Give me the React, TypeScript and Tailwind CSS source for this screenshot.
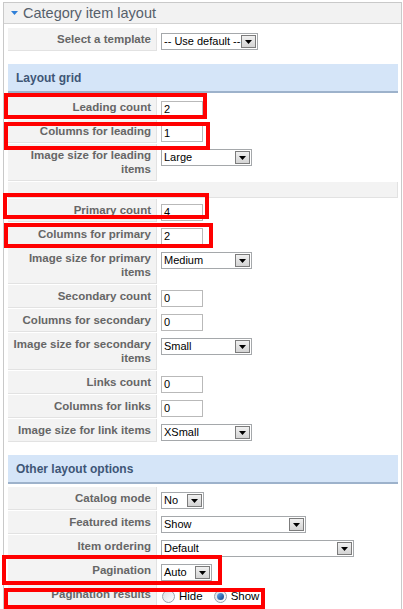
import React from "react";

type Field =
  | { kind: "input"; label: string; value: string }
  | { kind: "select"; label: string; value: string; width: number }
  | { kind: "radio"; label: string }
  | { kind: "sep" };

const gridFields: Field[] = [
  { kind: "input", label: "Leading count", value: "2" },
  { kind: "input", label: "Columns for leading", value: "1" },
  { kind: "select", label: "Image size for leading items", value: "Large", width: 91 },
  { kind: "sep" },
  { kind: "input", label: "Primary count", value: "4" },
  { kind: "input", label: "Columns for primary", value: "2" },
  { kind: "select", label: "Image size for primary items", value: "Medium", width: 91 },
  { kind: "input", label: "Secondary count", value: "0" },
  { kind: "input", label: "Columns for secondary", value: "0" },
  { kind: "select", label: "Image size for secondary items", value: "Small", width: 91 },
  { kind: "input", label: "Links count", value: "0" },
  { kind: "input", label: "Columns for links", value: "0" },
  { kind: "select", label: "Image size for link items", value: "XSmall", width: 91 },
];

const otherFields: Field[] = [
  { kind: "select", label: "Catalog mode", value: "No", width: 43 },
  { kind: "select", label: "Featured items", value: "Show", width: 145 },
  { kind: "select", label: "Item ordering", value: "Default", width: 193 },
  { kind: "select", label: "Pagination", value: "Auto", width: 51 },
  { kind: "radio", label: "Pagination results" },
];

function Select({ value, width }: { value: string; width: number }) {
  return (
    <div
      className="flex h-[17px] items-center border border-[#a5a8ab] bg-white"
      style={{ width }}
    >
      <span className="flex-1 overflow-hidden whitespace-nowrap pl-[2px] text-[11px] leading-[15px] text-black">
        {value}
      </span>
      <span className="mr-[1px] flex h-[13px] w-[15px] shrink-0 items-center justify-center border border-[#7c7c7c] bg-gradient-to-b from-[#f0f0f0] to-[#d4d4d4]">
        <svg width="7" height="4" viewBox="0 0 7 4">
          <path d="M0 0h7L3.5 4z" fill="#000" />
        </svg>
      </span>
    </div>
  );
}

function TextBox({ value }: { value: string }) {
  return (
    <div className="flex h-[17px] w-[42px] items-center border border-[#b9b9b9] bg-white pl-[2px] text-[11px] leading-[15px] text-black">
      {value}
    </div>
  );
}

function Radio({ checked }: { checked?: boolean }) {
  return (
    <span className="flex h-[13px] w-[13px] items-center justify-center rounded-full border border-[#9aa3ad] bg-gradient-to-br from-[#d9dee4] to-white">
      {checked && (
        <span className="h-[7px] w-[7px] rounded-full bg-gradient-to-br from-[#6cb0ee] to-[#0d3f86]" />
      )}
    </span>
  );
}

function Row({ field }: { field: Field }) {
  if (field.kind === "sep") {
    return <div className="h-[16px] border-r border-b border-[#e2e2e2] bg-[#f3f3f3]" />;
  }
  return (
    <div className="flex">
      <div className="w-[149px] border-r border-b border-[#e2e2e2] bg-[#f3f3f3] py-[4px] pr-[5px] pl-[3px] text-right text-[11.5px] leading-[14px] font-bold text-[#666]">
        {field.label}
      </div>
      <div className="pt-[5px] pl-[4px]">
        {field.kind === "input" && <TextBox value={field.value} />}
        {field.kind === "select" && <Select value={field.value} width={field.width} />}
        {field.kind === "radio" && (
          <div className="flex h-[17px] items-center text-[11.5px] text-black">
            <span className="ml-[1px]">
              <Radio />
            </span>
            <span className="ml-[4px]">Hide</span>
            <span className="ml-[11px]">
              <Radio checked />
            </span>
            <span className="ml-[4px]">Show</span>
          </div>
        )}
      </div>
    </div>
  );
}

function SectionHeader({ title }: { title: string }) {
  return (
    <div className="flex h-[29px] items-center border-b-2 border-[#9db2cb] bg-[#d5e5f8] pl-[8px] text-[12px] font-bold text-[#3e5676]">
      {title}
    </div>
  );
}

export default function App() {
  const marks = [
    "left-[4px] top-[93px] w-[203px] h-[26px]",
    "left-[4px] top-[122px] w-[206px] h-[28px]",
    "left-[3px] top-[193px] w-[206px] h-[26px]",
    "left-[4px] top-[223px] w-[209px] h-[25px]",
    "left-[2px] top-[555px] w-[220px] h-[30px]",
    "left-[4px] top-[588px] w-[261px] h-[21px]",
  ];

  return (
    <div className="relative min-h-[620px] w-[403px] bg-white pt-[2px] font-['Liberation_Sans',Arial,sans-serif]">
      <div className="ml-[3px] w-[399px] border border-[#c9c9c9] pb-[20px]">
        <div className="flex h-[21px] items-center border-b border-[#d2d2d2] bg-[#f2f2f2] pl-[7px]">
          <svg width="7" height="4" viewBox="0 0 7 4" className="mr-[5px]">
            <path d="M0 0h7L3.5 4z" fill="#2f7fd8" />
          </svg>
          <span className="text-[14.5px] leading-none text-[#56606b]">Category item layout</span>
        </div>

        <div className="pt-[4px] pr-[3px] pl-[4px]">
          <Row field={{ kind: "select", label: "Select a template", value: "-- Use default --", width: 97 }} />

          <div className="mt-[13px]">
            <SectionHeader title="Layout grid" />
          </div>
          <div className="mt-[3px] flex flex-col gap-[1px]">
            {gridFields.map((f, i) => (
              <Row key={i} field={f} />
            ))}
          </div>

          <div className="mt-[13px]">
            <SectionHeader title="Other layout options" />
          </div>
          <div className="mt-[3px] flex flex-col gap-[1px]">
            {otherFields.map((f, i) => (
              <Row key={i} field={f} />
            ))}
          </div>
        </div>
      </div>

      {marks.map((m, i) => (
        <div key={i} className={`absolute border-4 border-[#ff0000] ${m}`} />
      ))}
    </div>
  );
}
